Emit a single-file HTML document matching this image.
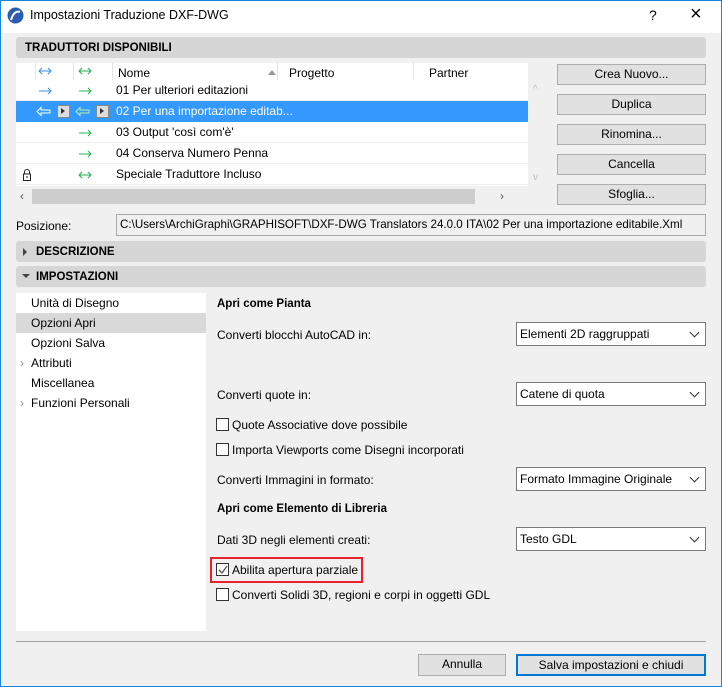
<!DOCTYPE html>
<html><head><style>
*{box-sizing:border-box;margin:0;padding:0}
body{width:722px;height:687px;background:#f0f0f0;font-family:"Liberation Sans",Tahoma,sans-serif;font-size:12px;color:#000;position:relative;overflow:hidden}
.a{position:absolute;white-space:nowrap}
.frame{position:absolute;left:0;top:0;width:722px;height:687px;border:1px solid #1883d7;pointer-events:none}
.hdr{position:absolute;left:16px;width:690px;height:21px;background:#d6d6d6;border-radius:3px;font-weight:bold;font-size:11.5px;line-height:22px;padding-left:9px}
.btn{position:absolute;background:#e1e1e1;border:1px solid #adadad;text-align:center;line-height:19px}
.dd{position:absolute;left:516px;width:190px;height:24px;background:#fff;border:1px solid #7a7a7a;line-height:22px;padding-left:3px}
.dd:after{content:"";position:absolute;right:7px;top:6px;width:6px;height:6px;border-right:1px solid #333;border-bottom:1px solid #333;transform:rotate(45deg)}
.cb{position:absolute;width:13px;height:13px;border:1px solid #333;background:#fff}
.row{position:absolute;left:16px;width:512px;height:21px;line-height:21px;border-bottom:1px solid #eee}
svg.ar{position:absolute}
</style></head><body>
<div class="a" style="left:0;top:0;width:722px;height:33px;background:#fff"></div>
<svg class="a" style="left:7px;top:7px" width="17" height="17"><circle cx="8.5" cy="8.5" r="8" fill="#2a5db0"/><path d="M4 13 Q7 3 13 5" stroke="#fff" stroke-width="2" fill="none"/></svg>
<div class="a" style="left:30px;top:8px;font-size:12.5px">Impostazioni Traduzione DXF-DWG</div>
<div class="a" style="left:649px;top:7px;font-size:14px">?</div>
<div class="a" style="left:690px;top:3px;font-size:20px;font-weight:lighter">×</div>

<div class="hdr" style="top:37px">TRADUTTORI DISPONIBILI</div>
<div class="a" style="left:16px;top:63px;width:512px;height:123px;background:#fff"></div>
<div class="a" style="left:35px;top:63px;width:1px;height:17px;background:#e5e5e5"></div>
<div class="a" style="left:73px;top:63px;width:1px;height:17px;background:#e5e5e5"></div>
<div class="a" style="left:112px;top:63px;width:1px;height:17px;background:#e5e5e5"></div>
<div class="a" style="left:277px;top:63px;width:1px;height:17px;background:#e5e5e5"></div>
<div class="a" style="left:413px;top:63px;width:1px;height:17px;background:#e5e5e5"></div>
<svg class="ar" style="left:38px;top:66px" width="14" height="10"><path d="M1 5H13M4 2L1 5L4 8M10 2L13 5L10 8" stroke="#3b8ef0" fill="none"/></svg>
<svg class="ar" style="left:78px;top:66px" width="14" height="10"><path d="M1 5H13M4 2L1 5L4 8M10 2L13 5L10 8" stroke="#22b14c" fill="none"/></svg>
<div class="a" style="left:118px;top:66px">Nome</div>
<div class="a" style="left:268px;top:70px;width:0;height:0;border-left:4px solid transparent;border-right:4px solid transparent;border-bottom:5px solid #999"></div>
<div class="a" style="left:289px;top:66px">Progetto</div><div class="a" style="left:429px;top:66px">Partner</div>
<div class="row" style="top:80px"><span class="a" style="left:100px">01 Per ulteriori editazioni</span></div>
<svg class="ar" style="left:38px;top:86px" width="14" height="10"><path d="M1 5H13M10 2L13 5L10 8" stroke="#3b8ef0" fill="none"/></svg>
<svg class="ar" style="left:78px;top:86px" width="14" height="10"><path d="M1 5H13M10 2L13 5L10 8" stroke="#22b14c" fill="none"/></svg>
<div class="row" style="top:101px;background:#3399ff;color:#fff;border:0"><span class="a" style="left:41px;top:4px;width:13px;height:13px;background:#ddd;border:1px solid #888"></span><span class="a" style="left:45px;top:7px;border-top:3px solid transparent;border-bottom:3px solid transparent;border-left:4px solid #333"></span><span class="a" style="left:80px;top:4px;width:13px;height:13px;background:#ddd;border:1px solid #888"></span><span class="a" style="left:84px;top:7px;border-top:3px solid transparent;border-bottom:3px solid transparent;border-left:4px solid #333"></span><span class="a" style="left:100px">02 Per una importazione editab...</span></div>
<svg class="ar" style="left:36px;top:106px" width="15" height="11"><path d="M1 5.5L5 1.5V4H14V7H5V9.5Z" stroke="#fff" fill="none"/></svg>
<svg class="ar" style="left:75px;top:106px" width="15" height="11"><path d="M1 5.5L5 1.5V4H14V7H5V9.5Z" stroke="#b6f0b0" fill="none"/></svg>
<div class="row" style="top:122px"><span class="a" style="left:100px">03 Output 'così com'è'</span></div>
<svg class="ar" style="left:78px;top:128px" width="14" height="10"><path d="M1 5H13M10 2L13 5L10 8" stroke="#22b14c" fill="none"/></svg>
<div class="row" style="top:143px"><span class="a" style="left:100px">04 Conserva Numero Penna</span></div>
<svg class="ar" style="left:78px;top:149px" width="14" height="10"><path d="M1 5H13M10 2L13 5L10 8" stroke="#22b14c" fill="none"/></svg>
<div class="row" style="top:164px"><span class="a" style="left:100px">Speciale Traduttore Incluso</span></div>
<svg class="ar" style="left:22px;top:168px" width="10" height="14"><path d="M2.5 6V4A2.5 2.5 0 0 1 7.5 4V6M1.5 6H8.5V12.5H1.5Z M5 8V10" stroke="#222" fill="none"/></svg>
<svg class="ar" style="left:78px;top:170px" width="14" height="10"><path d="M1 5H13M4 2L1 5L4 8M10 2L13 5L10 8" stroke="#22b14c" fill="none"/></svg>
<div class="a" style="left:533px;top:84px;color:#bbb;font-size:10px">^</div>
<div class="a" style="left:533px;top:172px;color:#bbb;font-size:10px">v</div>
<div class="a" style="left:16px;top:187px;width:512px;height:18px;background:#f0f0f0"></div>
<div class="a" style="left:32px;top:189px;width:443px;height:15px;background:#cdcdcd"></div>
<div class="a" style="left:20px;top:189px;color:#555">‹</div><div class="a" style="left:500px;top:189px;color:#555">›</div>
<div class="btn" style="left:557px;top:64px;width:149px;height:21px">Crea Nuovo...</div>
<div class="btn" style="left:557px;top:94px;width:149px;height:21px">Duplica</div>
<div class="btn" style="left:557px;top:124px;width:149px;height:21px">Rinomina...</div>
<div class="btn" style="left:557px;top:154px;width:149px;height:21px">Cancella</div>
<div class="btn" style="left:557px;top:184px;width:149px;height:21px">Sfoglia...</div>
<div class="a" style="left:16px;top:219px">Posizione:</div>
<div class="a" style="left:116px;top:214px;width:590px;height:22px;border:1px solid #aaa;line-height:20px;padding-left:3px;font-size:11.6px">C:\Users\ArchiGraphi\GRAPHISOFT\DXF-DWG Translators 24.0.0 ITA\02 Per una importazione editabile.Xml</div>

<div class="hdr" style="top:241px;padding-left:20px">DESCRIZIONE</div>
<div class="a" style="left:23px;top:248px;border-top:4px solid transparent;border-bottom:4px solid transparent;border-left:4px solid #444"></div>
<div class="hdr" style="top:266px;padding-left:20px">IMPOSTAZIONI</div>
<div class="a" style="left:22px;top:274px;border-left:4px solid transparent;border-right:4px solid transparent;border-top:4px solid #444"></div>

<div class="a" style="left:16px;top:293px;width:190px;height:338px;background:#fff"></div>
<div class="a" style="left:16px;top:313px;width:190px;height:20px;background:#d9d9d9"></div>
<div class="a" style="left:31px;top:296px">Unità di Disegno</div>
<div class="a" style="left:31px;top:316px">Opzioni Apri</div>
<div class="a" style="left:31px;top:336px">Opzioni Salva</div>
<div class="a" style="left:20px;top:356px;color:#888">›</div><div class="a" style="left:31px;top:356px">Attributi</div>
<div class="a" style="left:31px;top:376px">Miscellanea</div>
<div class="a" style="left:20px;top:396px;color:#888">›</div><div class="a" style="left:31px;top:396px">Funzioni Personali</div>

<div class="a" style="left:217px;top:298px;font-weight:bold;font-size:11.5px">Apri come Pianta</div>
<div class="a" style="left:217px;top:328px">Converti blocchi AutoCAD in:</div>
<div class="dd" style="top:322px">Elementi 2D raggruppati</div>
<div class="a" style="left:217px;top:388px">Converti quote in:</div>
<div class="dd" style="top:382px">Catene di quota</div>
<div class="cb" style="left:216px;top:418px"></div><div class="a" style="left:232px;top:418px">Quote Associative dove possibile</div>
<div class="cb" style="left:216px;top:443px"></div><div class="a" style="left:232px;top:443px">Importa Viewports come Disegni incorporati</div>
<div class="a" style="left:217px;top:473px">Converti Immagini in formato:</div>
<div class="dd" style="top:467px">Formato Immagine Originale</div>
<div class="a" style="left:217px;top:503px;font-weight:bold;font-size:11.5px">Apri come Elemento di Libreria</div>
<div class="a" style="left:217px;top:533px">Dati 3D negli elementi creati:</div>
<div class="dd" style="top:527px">Testo GDL</div>
<div class="a" style="left:210px;top:557px;width:153px;height:26px;border:2px solid #e8222a"></div>
<div class="cb" style="left:216px;top:563px"></div>
<svg class="a" style="left:217px;top:564px" width="12" height="12"><path d="M2 6 L5 9 L10 2" stroke="#555" stroke-width="1.3" fill="none"/></svg>
<div class="a" style="left:232px;top:563px">Abilita apertura parziale</div>
<div class="cb" style="left:216px;top:588px"></div><div class="a" style="left:232px;top:588px">Converti Solidi 3D, regioni e corpi in oggetti GDL</div>

<div class="a" style="left:16px;top:641px;width:690px;height:1px;background:#a0a0a0"></div>
<div class="btn" style="left:418px;top:654px;width:88px;height:22px">Annulla</div>
<div class="btn" style="left:516px;top:654px;width:190px;height:22px;border:2px solid #0078d7;line-height:18px">Salva impostazioni e chiudi</div>
<div class="frame"></div>
</body></html>
